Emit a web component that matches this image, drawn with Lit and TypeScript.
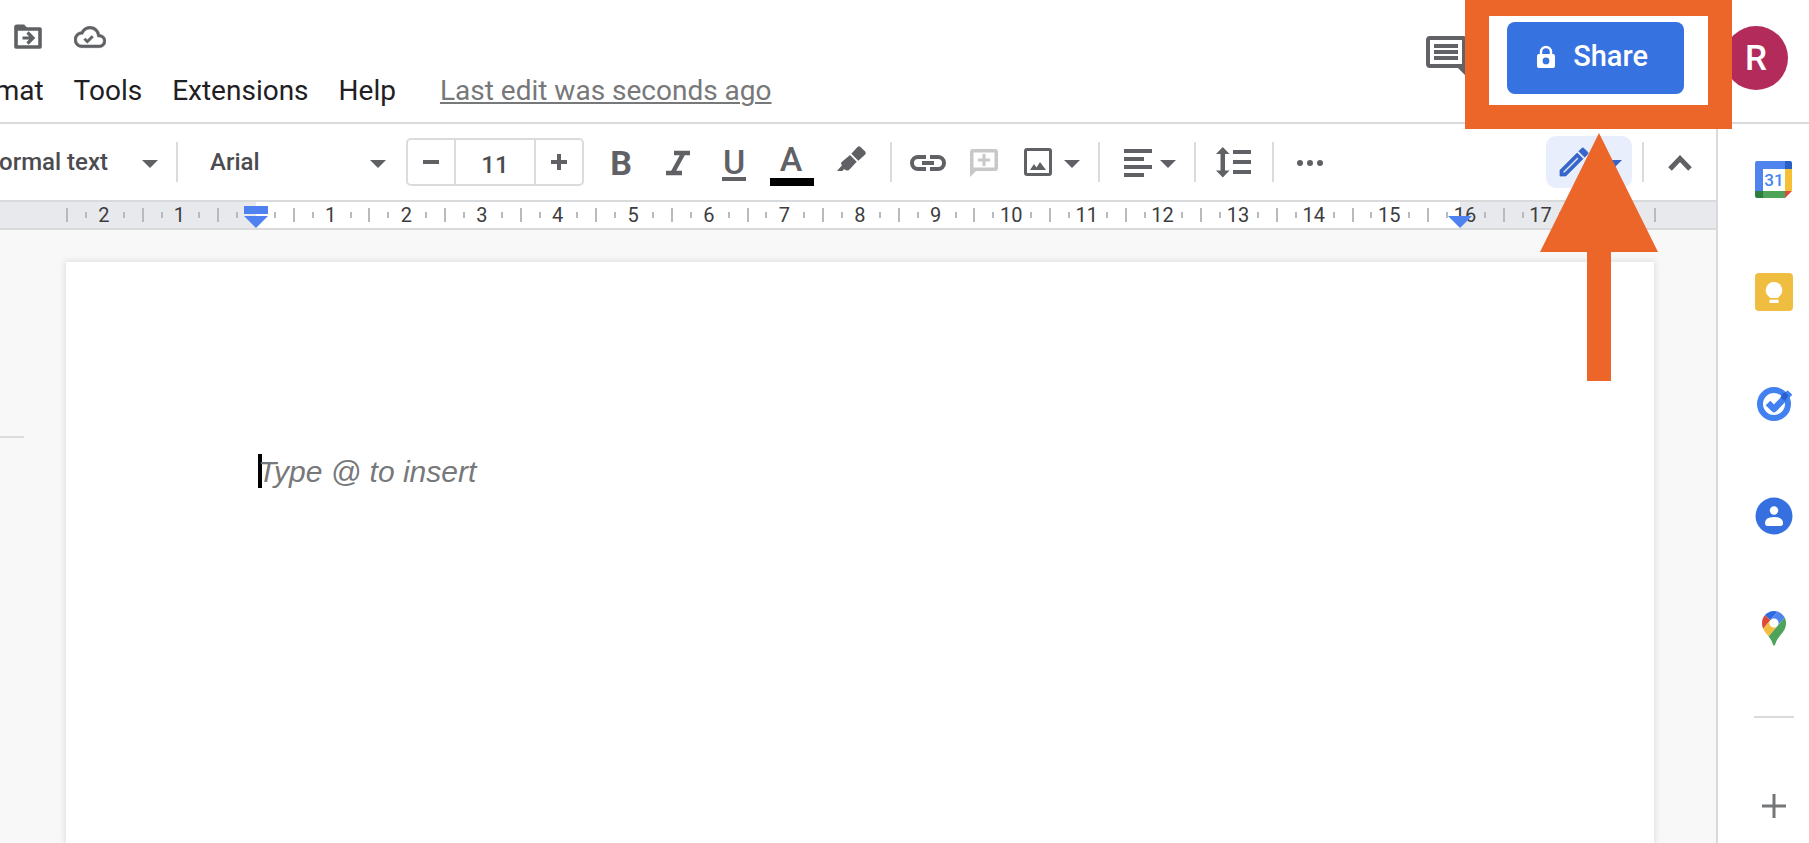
import { LitElement, html, css, svg } from "lit";
import { customElement, property, state } from "lit/decorators.js";

const caret = html`<svg class="caret" width="16" height="36" viewBox="0 0 16 36" aria-hidden="true">
  <path d="M0 16h16l-8 8z" fill="currentColor" />
</svg>`;

@customElement("docs-ruler")
export class DocsRuler extends LitElement {
  static styles = css`
    :host {
      display: block;
      background: #e8e9ed;
      border-top: 2px solid #d9dadc;
      border-bottom: 2px solid #d9dadc;
      padding: 0 62px 0 66px;
    }
    .scale {
      position: relative;
      display: grid;
      grid-template-columns: repeat(21, 1fr);
      height: 26px;
      background: linear-gradient(90deg, transparent 190px, #fff 190px, #fff calc(100% - 194px), transparent calc(100% - 194px));
    }
    .cell {
      display: grid;
      grid-template-columns: repeat(4, minmax(0, 1fr));
      align-items: center;
      font: 400 20px/26px Roboto, sans-serif;
      color: #3c3d40;
      min-width: 0;
    }
    .cell > * {
      grid-row: 1;
    }
    .cell:last-of-type {
      border-image: linear-gradient(transparent 6px, #b9babd 6px, #b9babd 20px, transparent 20px) 0 2 0 0;
      border-right: 2px solid;
      margin-right: -2px;
    }
    .major {
      grid-column: 1;
      width: 2px;
      height: 14px;
      background: #b9babd;
    }
    .minor {
      grid-column: 2;
      width: 2px;
      height: 6px;
      background: #b9babd;
    }
    .label + .minor {
      grid-column: 4;
    }
    .label {
      grid-column: 2 / 4;
      text-align: center;
    }
    .marker {
      position: absolute;
      top: 4px;
    }
    .left {
      left: 178px;
    }
    .right {
      right: 182px;
    }
  `;

  render() {
    const cells = Array.from({ length: 21 }, (_, i) => Math.abs(i - 2));
    return html`<div class="scale">
      ${cells.map(
        (n) => html`<div class="cell">
          <span class="major"></span><span class="minor"></span>
          <span class="label">${n === 0 ? "" : n}</span>
          <span class="minor"></span>
        </div>`
      )}
      <svg class="marker left" width="24" height="22" viewBox="0 0 24 22">
        <path d="M0 0h24v8H0zM0 10h24L12 22z" fill="#4f82f0" />
      </svg>
      <svg class="marker right" width="24" height="22" viewBox="0 0 24 22">
        <path d="M0 10h24L12 22z" fill="#4f82f0" />
      </svg>
    </div>`;
  }
}

@customElement("docs-header")
export class DocsHeader extends LitElement {
  static styles = css`
    :host {
      display: flex;
      justify-content: space-between;
      border-bottom: 2px solid #d9dadc;
      background: #fff;
      font-family: Roboto, sans-serif;
      overflow: hidden;
    }
    button {
      font: inherit;
      color: inherit;
      background: none;
      border: 0;
      padding: 0;
      cursor: pointer;
      display: flex;
      align-items: center;
    }
    .start {
      padding: 16px 0 13px;
    }
    .status {
      display: flex;
      align-items: center;
      gap: 28px;
      height: 41px;
      padding-left: 12px;
      margin-bottom: 16px;
      color: #5f6165;
    }
    .menus {
      display: flex;
      gap: 30px;
      margin-left: -46px;
      font-size: 28px;
      line-height: 36px;
      color: #1f2023;
      white-space: nowrap;
    }
    .edit {
      margin-left: 14px;
      color: #777879;
      text-decoration: underline;
      text-decoration-thickness: 2px;
      text-underline-offset: 2px;
    }
    .end {
      display: flex;
      align-items: center;
      gap: 40px;
      height: 72px;
      padding: 22px 21px 0 0;
    }
    .comments {
      color: #616265;
    }
    .share {
      height: 72px;
      box-sizing: border-box;
      padding: 0 36px 4px 30px;
      gap: 18px;
      background: #3672e0;
      border-radius: 8px;
      color: #fff;
      font-size: 29px;
      font-weight: 500;
    }
    .avatar {
      width: 64px;
      height: 64px;
      border-radius: 50%;
      justify-content: center;
      background: #b22b5b;
      color: #fff;
      font-size: 35px;
      font-weight: 500;
    }
  `;

  render() {
    return html`
      <div class="start">
        <div class="status">
          <button aria-label="Move">
            <svg width="34" height="34" viewBox="0 0 34 34" fill="none" stroke="currentColor">
              <path d="M4 9h24v18H4z" stroke-width="3.6" stroke-linejoin="round" />
              <path d="M2.200 9V7q0-2.500 2.500-2.500h7.500l3.500 4z" fill="currentColor" stroke="none" />
              <path d="M10.500 18h10M15.500 12.500l5.500 5.500-5.500 5.500" stroke-width="3.2" />
            </svg>
          </button>
          <button aria-label="Document status">
            <svg width="32" height="32" viewBox="0 0 24 24" fill="currentColor" stroke="currentColor" stroke-width=".4">
              <path d="M19.350 10.040C18.670 6.590 15.640 4 12 4 9.110 4 6.600 5.640 5.350 8.040 2.340 8.360 0 10.910 0 14c0 3.310 2.690 6 6 6h13c2.760 0 5-2.240 5-5 0-2.640-2.050-4.780-4.650-4.960zM19 18H6c-2.210 0-4-1.790-4-4 0-2.050 1.530-3.760 3.560-3.970l1.070-.110.500-.950C8.080 7.140 9.940 6 12 6c2.620 0 4.880 1.860 5.390 4.430l.300 1.500 1.530.110c1.560.100 2.780 1.410 2.780 2.960 0 1.650-1.350 3-3 3zm-9-3.820l-1.400-1.400-1.300 1.300 2.700 2.700 4.600-4.600-1.300-1.300z" />
            </svg>
          </button>
        </div>
        <nav class="menus">
          <button>Format</button>
          <button>Tools</button>
          <button>Extensions</button>
          <button>Help</button>
          <a class="edit" href="#history">Last edit was seconds ago</a>
        </nav>
      </div>
      <div class="end">
        <button class="comments" aria-label="Comments">
          <svg width="41" height="44" viewBox="0 0 41 44" fill="currentColor">
            <path fill-rule="evenodd" d="M4 0h33q4 0 4 4v37l-9-9H4q-4 0-4-4V4q0-4 4-4zM4 4v24h32V4z" />
            <path d="M8 8h24v4H8zM8 14h24v4H8zM8 20h24v4H8z" />
          </svg>
        </button>
        <button class="share">
          <svg width="18" height="24" viewBox="0 0 18 24" aria-hidden="true">
            <path d="M4 11V8a5 5 0 0 1 10 0v3" fill="none" stroke="#fff" stroke-width="2.400" />
            <path fill="#fff" fill-rule="evenodd" d="M2 10h14q2 0 2 2v10q0 2-2 2H2q-2 0-2-2V12q0-2 2-2zM9 13.500a3.400 3.400 0 1 0 0 6.800a3.400 3.400 0 1 0 0-6.800z" />
          </svg>
          <span>Share</span>
        </button>
        <button class="avatar" aria-label="Account">R</button>
      </div>
    `;
  }
}

@customElement("docs-toolbar")
export class DocsToolbar extends LitElement {
  @state() private size = "11";

  static styles = css`
    :host {
      display: flex;
      align-items: center;
      height: 76px;
      background: #fff;
      color: #5f6165;
      font-family: Roboto, sans-serif;
      overflow: hidden;
    }
    button {
      font: inherit;
      color: inherit;
      background: none;
      border: 0;
      padding: 0;
      cursor: pointer;
      display: flex;
      align-items: center;
    }
    svg {
      display: block;
      overflow: visible;
    }
    .sep {
      flex: none;
      width: 2px;
      height: 40px;
      margin: 0 12px;
      background: #dadbdd;
    }
    .group {
      display: flex;
      align-items: center;
      padding: 0 6px;
      gap: 24px;
    }
    .picker {
      display: grid;
      align-items: center;
      justify-items: end;
      flex: none;
    }
    .picker > * {
      grid-area: 1 / 1;
    }
    .picker .caret {
      pointer-events: none;
    }
    .picker select {
      appearance: none;
      width: 100%;
      height: 48px;
      padding: 0 30px 0 14px;
      border: 0;
      background: none;
      font: 500 24px/48px Roboto, sans-serif;
      color: #4b4c4f;
    }
    .style {
      width: 190px;
      margin-left: -32px;
      margin-right: 6px;
    }
    .font {
      width: 190px;
      margin-left: 6px;
      margin-right: 20px;
    }
    .size {
      display: flex;
      box-sizing: border-box;
      width: 178px;
      height: 48px;
      border: 2px solid #dadbdd;
      border-radius: 5px;
      flex: none;
    }
    .size button {
      flex: 1;
      justify-content: center;
    }
    .size input {
      box-sizing: border-box;
      width: 82px;
      border: 0;
      border-left: 2px solid #dadbdd;
      border-right: 2px solid #dadbdd;
      padding: 6px 0 0;
      text-align: center;
      font: 500 24px/38px Roboto, sans-serif;
      color: #4b4c4f;
      background: none;
    }
    .format {
      display: flex;
      gap: 1px;
      margin: 0 1px 0 9px;
    }
    .format button {
      padding: 0 10px;
    }
    .glyph {
      font: 500 34px Roboto, sans-serif;
      text-anchor: middle;
      fill: currentColor;
    }
    .heavy {
      font-weight: 700;
    }
    .menu {
      gap: 12px;
    }
    .near {
      gap: 6px;
    }
    .faint {
      color: #c8c8c9;
    }
    .mode {
      margin-left: auto;
      box-sizing: border-box;
      width: 86px;
      height: 52px;
      padding: 0 10px 0 14px;
      justify-content: space-between;
      border-radius: 10px;
      background: #e8eefb;
      color: #3565c9;
    }
    .mode + .sep {
      margin: 0 12px 0 10px;
    }
    .hide {
      padding: 0 24px 0 12px;
    }
  `;

  private icon(width: number, body: unknown) {
    return html`<svg width=${width} height="36" viewBox="0 0 ${width} 36" fill="currentColor" aria-hidden="true">${body}</svg>`;
  }

  private step(by: number) {
    this.size = String(Math.max(1, Number(this.size) + by));
  }

  render() {
    return html`
      <div class="picker style">
        <select aria-label="Styles"><option>Normal text</option></select>
        ${caret}
      </div>
      <span class="sep"></span>
      <div class="picker font">
        <select aria-label="Font"><option>Arial</option></select>
        ${caret}
      </div>
      <div class="size">
        <button aria-label="Decrease font size" @click=${() => this.step(-1)}>
          <svg width="16" height="16" viewBox="0 0 16 16"><path d="M0 6h16v4H0z" fill="currentColor" /></svg>
        </button>
        <input aria-label="Font size" .value=${this.size} />
        <button aria-label="Increase font size" @click=${() => this.step(1)}>
          <svg width="16" height="16" viewBox="0 0 16 16"><path d="M0 6h6V0h4v6h6v4h-6v6H6v-6H0z" fill="currentColor" /></svg>
        </button>
      </div>
      <div class="format">
        <button aria-label="Bold">${this.icon(36, svg`<text class="glyph heavy" x="18" y="31">B</text>`)}</button>
        <button aria-label="Italic">
          ${this.icon(36, svg`<path d="M14 9h16M6 29h16M23.500 9L12.500 29" fill="none" stroke="currentColor" stroke-width="4.500" />`)}
        </button>
        <button aria-label="Underline">
          ${this.icon(36, svg`<text class="glyph" x="17" y="30">U</text><path d="M5 33h24v4H5z" />`)}
        </button>
        <button aria-label="Text color">
          ${this.icon(36, svg`<text class="glyph" x="17" y="27">A</text><path d="M-4 34h44v8H-4z" fill="#000" />`)}
        </button>
        <button aria-label="Highlight color">
          ${this.icon(36, svg`<path d="M26.500 3q1.500-1.300 3 0l4.700 4.600q1.300 1.500 0 3L27.300 16.700 20.300 9.700z" />
            <path d="M19 11l6.700 6.700-6.700 7.300q-2 2.500-4.500 1L13 25l-1.500 2H6l5-5.700q-2-1.800 0-3.500z" />`)}
        </button>
      </div>
      <span class="sep"></span>
      <div class="group">
        <button aria-label="Insert link">
          ${this.icon(36, svg`<path d="M16 13H8a6 6 0 0 0 0 12h8M20 13h8a6 6 0 0 1 0 12h-8M12 19h12" fill="none" stroke="currentColor" stroke-width="4" />`)}
        </button>
        <button class="faint" aria-label="Add comment">
          ${this.icon(28, svg`<path fill-rule="evenodd" d="M3 5h22q3 0 3 3v16q0 3-3 3H6l-6 6V8q0-3 3-3zM3.500 8.500v15h21v-15z" />
            <path d="M8 14.500h4.500V10h3v4.500H20v3h-4.500V22h-3v-4.500H8z" />`)}
        </button>
        <button class="menu" aria-label="Insert image">
          ${this.icon(30, svg`<path fill-rule="evenodd" d="M5 4h22q3 0 3 3v22q0 3-3 3H5q-3 0-3-3V7q0-3 3-3zM5 7v22h22V7z" />
            <path d="M8 26l4-6 2.500 3.500L18 18l6 8z" />`)}
          ${caret}
        </button>
      </div>
      <span class="sep"></span>
      <div class="group">
        <button class="near" aria-label="Align">
          ${this.icon(36, svg`<path d="M6 5h28v4H6zM6 13h20v4H6zM6 21h28v4H6zM6 29h20v4H6z" />`)} ${caret}
        </button>
      </div>
      <span class="sep"></span>
      <div class="group">
        <button aria-label="Line spacing">
          ${this.icon(40, svg`<path d="M19 6h18v4H19zM19 16h18v4H19zM19 26h18v4H19zM8.800 3l6.700 7H11v16.500h4.500l-6.700 7-6.800-7h4.500V10H2z" />`)}
        </button>
      </div>
      <span class="sep"></span>
      <div class="group">
        <button aria-label="More">
          ${this.icon(36, svg`<circle cx="8" cy="19" r="3" /><circle cx="18" cy="19" r="3" /><circle cx="28" cy="19" r="3" />`)}
        </button>
      </div>
      <button class="mode" aria-label="Editing mode">
        <svg width="28" height="28" viewBox="3 3 18 18" fill="currentColor" stroke="currentColor" stroke-width=".5">
          <path d="M14.060 9.020l.920.920L5.920 19H5v-.920l9.060-9.060M17.660 3c-.250 0-.510.100-.700.290l-1.830 1.830 3.750 3.750 1.830-1.830c.390-.390.390-1.020 0-1.410l-2.340-2.340c-.200-.200-.450-.290-.710-.290zm-3.600 3.190L3 17.250V21h3.750L17.810 9.940l-3.750-3.750z" />
        </svg>
        ${caret}
      </button>
      <span class="sep"></span>
      <button class="hide" aria-label="Hide the menus">
        ${this.icon(24, svg`<path d="M2 25L12 14.500 22 25" fill="none" stroke="currentColor" stroke-width="5" />`)}
      </button>
    `;
  }
}

@customElement("docs-side-panel")
export class DocsSidePanel extends LitElement {
  static styles = css`
    :host {
      display: flex;
      flex-direction: column;
      padding: 36px 15px 0 36px;
      border-left: 2px solid #d9dadc;
      background: #fff;
    }
    button {
      flex: none;
      width: 40px;
      height: 40px;
      margin-bottom: 72px;
      padding: 0;
      border: 0;
      background: none;
      cursor: pointer;
    }
    button:last-child {
      margin-bottom: 0;
    }
    svg {
      display: block;
    }
    hr {
      flex: none;
      width: 40px;
      height: 2px;
      margin: -4px 0 68px;
      border: 0;
      background: #d9dadc;
    }
    .day {
      font: 500 17px Roboto, sans-serif;
      text-anchor: middle;
      fill: #4285f4;
    }
  `;

  render() {
    return html`
      <button aria-label="Calendar">
        <svg width="40" height="40" viewBox="0 0 40 40">
          <path d="M3 1h28v8H9v22H1V3q0-2 2-2z" fill="#4f84ee" />
          <path d="M31 1h5q2 0 2 2v6h-7z" fill="#2a5fc8" />
          <path d="M31 9h7v22h-7z" fill="#f7bf35" />
          <path d="M9 31h22v7H9z" fill="#4ea35a" />
          <path d="M1 31h8v7H3q-2 0-2-2z" fill="#2c7d3e" />
          <path d="M31 31h7l-7 7z" fill="#dc4a3d" />
          <text class="day" x="20" y="26">31</text>
        </svg>
      </button>
      <button aria-label="Keep">
        <svg width="40" height="40" viewBox="0 0 40 40">
          <rect x="1" y="1" width="38" height="38" rx="4" fill="#efbd3f" />
          <path d="M20 10a8.200 8.200 0 0 1 5 14.700q-1 1-1 1.300h-8q0-.300-1-1.300A8.200 8.200 0 0 1 20 10zM15.500 27.500h9V31h-9z" fill="#fff" />
          <path d="M15.500 26h9v1.500h-9z" fill="#efbd3f" />
        </svg>
      </button>
      <button aria-label="Tasks">
        <svg width="40" height="40" viewBox="0 0 40 40" fill="none">
          <circle cx="20" cy="20" r="14" stroke="#4281f0" stroke-width="6" />
          <path d="M14 19l6 6L36 8.500" stroke="#4281f0" stroke-width="6.500" stroke-linejoin="round" />
          <path d="M28.500 9.500l3-1.500 3 4-2.500 3-1 2-4.500-3.500z" fill="#2b5fd0" />
        </svg>
      </button>
      <button aria-label="Contacts">
        <svg width="40" height="40" viewBox="0 0 40 40">
          <circle cx="20" cy="20" r="18.500" fill="#3670e0" />
          <circle cx="20" cy="14.500" r="4.200" fill="#fff" />
          <path d="M11 27q0-6 9-6t9 6q0 3-2.500 3h-13Q11 30 11 27z" fill="#fff" />
        </svg>
      </button>
      <button aria-label="Maps">
        <svg width="40" height="40" viewBox="0 0 40 40">
          <g transform="translate(8 3) scale(.26)">
            <circle cx="46" cy="46" r="20" fill="#fff" />
            <path fill="#2d6be0" d="M60.200 2.200C55.800.800 51 0 46.100 0 32 0 19.300 6.400 10.800 16.500l21.800 18.300L60.200 2.200z" />
            <path fill="#dc4a3d" d="M10.800 16.500C4.100 24.500 0 34.900 0 46.100c0 8.700 1.700 15.700 4.600 22l28-33.300-21.800-18.300z" />
            <path fill="#4f84ee" d="M46.200 28.500c9.800 0 17.700 7.900 17.700 17.700 0 4.300-1.600 8.300-4.200 11.400 0 0 13.900-16.600 27.500-32.700-5.600-10.800-15.300-19-27-22.700L32.600 34.800c3.300-3.800 8.100-6.300 13.600-6.300" />
            <path fill="#f3bd42" d="M46.200 63.800c-9.800 0-17.700-7.900-17.700-17.700 0-4.300 1.500-8.300 4.100-11.300l-28 33.300c4.800 10.600 12.800 19.200 21 29.900l34.100-40.500c-3.300 3.900-8.100 6.300-13.500 6.300" />
            <path fill="#4ea35a" d="M59.100 109.200c15.400-24.100 33.300-35 33.300-63 0-7.700-1.900-14.900-5.200-21.300L25.600 98c2.600 3.400 5.300 7.300 7.900 11.300 9.400 14.500 6.800 23.100 12.800 23.100s3.400-8.700 12.800-23.200" />
          </g>
        </svg>
      </button>
      <hr />
      <button aria-label="Get add-ons">
        <svg width="40" height="40" viewBox="0 0 40 40">
          <path d="M18.500 8h3v10.500H32v3H21.500V32h-3V21.500H8v-3h10.500z" fill="#757678" />
        </svg>
      </button>
    `;
  }
}

@customElement("share-callout")
export class ShareCallout extends LitElement {
  static styles = css`
    :host {
      position: absolute;
      top: 0;
      right: 77px;
      width: 267px;
      pointer-events: none;
    }
    .frame {
      box-sizing: border-box;
      height: 129px;
      border: 24px solid #ec662a;
      border-top-width: 16px;
    }
    .arrow {
      display: block;
      margin: 4px auto 0;
    }
  `;

  render() {
    return html`
      <div class="frame"></div>
      <svg class="arrow" width="118" height="248" viewBox="0 0 118 248">
        <path d="M59 0l59 119H71v129H47V119H0z" fill="#ec662a" />
      </svg>
    `;
  }
}

@customElement("app-root")
export class AppRoot extends LitElement {
  @property() placeholder = "Type @ to insert";

  static styles = css`
    :host {
      position: relative;
      display: flex;
      flex-direction: column;
      height: 100vh;
      overflow: hidden;
      background: #fff;
    }
    .body {
      display: flex;
      flex: 1;
      min-height: 0;
    }
    .main {
      display: flex;
      flex-direction: column;
      flex: 1;
      min-width: 0;
    }
    .canvas {
      display: flex;
      flex: 1;
      min-height: 0;
      padding-right: 62px;
      background: #f8f8f8;
    }
    .gutter {
      width: 66px;
      padding-top: 206px;
    }
    .mark {
      width: 24px;
      height: 2px;
      background: #dcdcdc;
    }
    .page {
      flex: 1;
      margin-top: 32px;
      padding: 192px 192px 0;
      background: #fff;
      box-shadow: 0 0 6px 1px rgba(60, 64, 67, 0.15);
      display: flex;
      align-items: flex-start;
    }
    .cursor {
      width: 4px;
      height: 34px;
      margin-right: -4px;
      background: #000;
    }
    .text {
      font: italic 30px/36px "Liberation Sans", Arial, sans-serif;
      color: #77787a;
      outline: none;
    }
  `;

  render() {
    return html`
      <docs-header></docs-header>
      <div class="body">
        <div class="main">
          <docs-toolbar></docs-toolbar>
          <docs-ruler></docs-ruler>
          <div class="canvas">
            <div class="gutter"><div class="mark"></div></div>
            <div class="page">
              <span class="cursor"></span>
              <div class="text" role="textbox" aria-label="Document content" contenteditable="true">${this.placeholder}</div>
            </div>
          </div>
        </div>
        <docs-side-panel></docs-side-panel>
      </div>
      <share-callout></share-callout>
    `;
  }
}
